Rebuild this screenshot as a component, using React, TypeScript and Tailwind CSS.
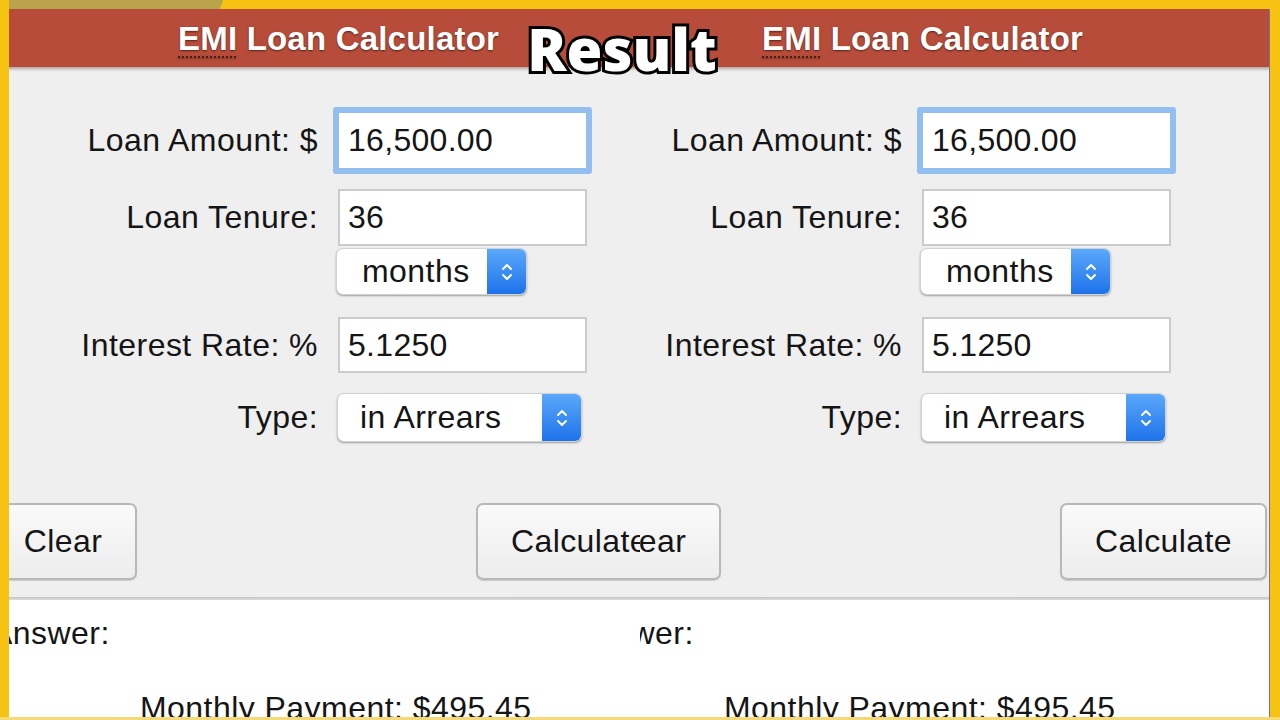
import React from 'react';

const Chevrons: React.FC = () => (
  <svg width="14" height="24" viewBox="0 0 14 24" fill="none">
    <path d="M3 9 L7 5 L11 9" stroke="white" strokeWidth="2" strokeLinecap="round" strokeLinejoin="round" />
    <path d="M3 15 L7 19 L11 15" stroke="white" strokeWidth="2" strokeLinecap="round" strokeLinejoin="round" />
  </svg>
);

interface SelectProps {
  value: string;
  className: string;
}

const FakeSelect: React.FC<SelectProps> = ({ value, className }) => (
  <div
    className={`flex items-stretch rounded-[7px] bg-white shadow-[0_1px_2px_rgba(0,0,0,0.35)] border border-[#d2d2d2] overflow-hidden ${className}`}
  >
    <div className="flex-1 flex items-center">{value}</div>
    <div className="w-[39px] flex items-center justify-center bg-gradient-to-b from-[#5aa8fa] to-[#1c72ea]">
      <Chevrons />
    </div>
  </div>
);

interface RowProps {
  label: string;
  className?: string;
  children: React.ReactNode;
}

const Row: React.FC<RowProps> = ({ label, className = '', children }) => (
  <div className={`flex shrink-0 items-center ${className}`}>
    <div className="w-[392px] shrink-0 text-right">{label}</div>
    {children}
  </div>
);

const inputBase =
  "bg-white text-[32px] tracking-[0.3px] text-[#151515] outline-none font-['Liberation_Sans',Arial,sans-serif]";

const buttonCls =
  'rounded-[7px] border-2 border-[#b8b8b8] bg-gradient-to-b from-[#fafafa] to-[#ededed] text-[32px] tracking-[0.4px] shadow-[0_1px_1px_rgba(0,0,0,0.15)]';

const Calculator: React.FC = () => (
  <div className="flex h-full w-[760px] shrink-0 flex-col text-[32px] leading-[37px] tracking-[0.45px] text-[#151515]">
    {/* header */}
    <div className="relative z-10 flex h-[58px] shrink-0 items-center bg-[#b74c3a] pl-[252px] shadow-[0_2px_3px_rgba(60,20,10,0.35)]">
      <span className="text-[33px] font-bold tracking-[0.2px] text-white [text-shadow:0_1px_2px_rgba(0,0,0,0.55)]">
        <span className="underline decoration-dotted decoration-[#4a1f18] decoration-2 underline-offset-[7px]">EMI</span>{' '}
        Loan Calculator
      </span>
    </div>

    {/* form */}
    <div className="flex h-[530px] shrink-0 flex-col bg-[#efefef]">
      <Row label="Loan Amount: $" className="mt-[40px] h-[67px]">
        <input
          readOnly
          defaultValue="16,500.00"
          className={`${inputBase} ml-[15px] h-[67px] w-[259px] rounded-[3px] border-[6px] border-[#92bef0] pl-[9px]`}
        />
      </Row>
      <Row label="Loan Tenure:" className="mt-[15px] h-[57px]">
        <input
          readOnly
          defaultValue="36"
          className={`${inputBase} ml-[20px] h-[57px] w-[249px] border-2 border-[#cbcbcb] pl-[8px]`}
        />
      </Row>
      <div className="mt-[2px] flex shrink-0">
        <FakeSelect value="months" className="ml-[410px] h-[47px] w-[191px] pl-[25px]" />
      </div>
      <Row label="Interest Rate: %" className="mt-[22px] h-[56px]">
        <input
          readOnly
          defaultValue="5.1250"
          className={`${inputBase} ml-[20px] h-[56px] w-[249px] border-2 border-[#cbcbcb] pl-[8px]`}
        />
      </Row>
      <Row label="Type:" className="mt-[20px] h-[49px]">
        <FakeSelect value="in Arrears" className="ml-[19px] h-[49px] w-[245px] pl-[22px]" />
      </Row>
      <div className="mt-[61px] flex h-[77px] shrink-0 justify-between pl-[63px] pr-[3px]">
        <button className={`w-[148px] ${buttonCls}`}>Clear</button>
        <button className={`w-[207px] ${buttonCls}`}>Calculate</button>
      </div>
    </div>
    <div className="h-[3px] shrink-0 bg-gradient-to-b from-[#c4c4c4] to-[#dedede]" />

    {/* answer */}
    <div className="flex flex-1 flex-col bg-white">
      <div className="mt-[15px] pl-[65px]">Answer:</div>
      <div className="mt-[38px] whitespace-nowrap pl-[214px]">Monthly Payment: $495.45</div>
    </div>
  </div>
);

export default function App() {
  return (
    <div className="relative flex h-[720px] w-[1280px] flex-col overflow-hidden bg-[#f6c313] font-['Liberation_Sans',Arial,sans-serif]">
      {/* top strip */}
      <div className="flex h-[9px] shrink-0">
        <div className="w-[9px]" />
        <div className="w-[214px] bg-[#b9a34b] [clip-path:polygon(0_0,100%_0,98.6%_100%,0_100%)]" />
      </div>

      <div className="flex h-[708px] shrink-0">
        <div className="w-[9px] shrink-0" />
        <div className="flex w-[1261px] shrink-0 border-r border-[#7a6fa0]">
          <div className="h-full w-[631px] shrink-0 overflow-hidden">
            <div className="ml-[-83px] h-full">
              <Calculator />
            </div>
          </div>
          <div className="h-full w-[629px] shrink-0 overflow-hidden">
            <div className="ml-[-130px] h-full">
              <Calculator />
            </div>
          </div>
        </div>
      </div>
      <div className="h-[3px] shrink-0 bg-[#f4d978]" />

      {/* overlay title */}
      <div className="absolute left-[622px] top-[20px] z-20 -translate-x-1/2 font-['Open_Sans',sans-serif] text-[58px] font-extrabold leading-none text-white [-webkit-text-stroke:6px_#000] [paint-order:stroke_fill]">
        Result
      </div>
    </div>
  );
}
